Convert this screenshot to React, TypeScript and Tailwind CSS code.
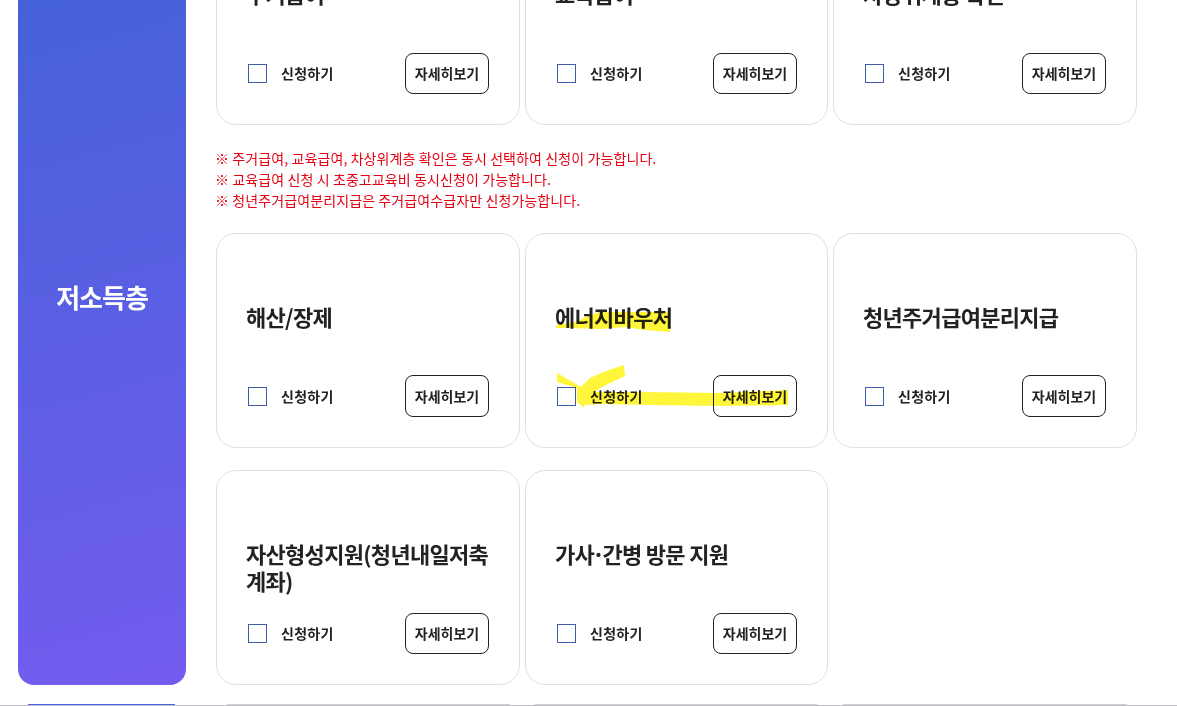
import type { ReactNode } from 'react';

const font = "font-['Noto_Sans_CJK_KR','Noto_Sans',sans-serif]";

function Card({ title, tall = false }: { title: ReactNode; tall?: boolean }) {
  return (
    <div className="bg-white border border-[#e0e0e0] rounded-[20px] pl-[29px] pr-[30px] pt-[69px] h-[215px] flex flex-col">
      <h3 className={`${tall ? 'h-[72px]' : 'h-[73px]'} text-[22px] leading-[27px] font-bold tracking-[-0.7px] text-[#222]`}>{title}</h3>
      <div className="flex items-center justify-between pl-[2px]">
        <label className="flex items-center gap-[14px]">
          <span className="block w-[19px] h-[19px] border border-[#3f5ba9] bg-white" />
          <span className="text-[14px] font-bold tracking-[0.3px] text-[#222]">신청하기</span>
        </label>
        <button className={`w-[84px] ${tall ? 'h-[42px]' : 'h-[41px]'} border border-[#222] rounded-[8px] bg-white text-[14px] font-bold tracking-[0px] text-[#222]`}>
          자세히보기
        </button>
      </div>
    </div>
  );
}

export default function App() {
  return (
    <div className={`relative w-[1177px] h-[706px] overflow-hidden bg-white ${font}`}>
      <div className="-mt-[90px] pl-[18px] pr-[40px] flex gap-[30px] items-start">
        <aside className="w-[168px] h-[775px] shrink-0 rounded-b-[16px] bg-[linear-gradient(165deg,#3f62d6,#735cee)] flex items-center justify-center pb-[3px]">
          <h2 className="text-[26px] font-bold tracking-[-1px] text-white">저소득층</h2>
        </aside>

        <div className="flex-1">
          <div className="grid grid-cols-[304px_303px_304px] gap-x-[5px]">
            <Card title="주거급여" />
            <Card title="교육급여" />
            <Card title="차상위계층 확인" />
          </div>

          <div className="mt-[23px] -ml-[1px] text-[14px] leading-[21px] tracking-[0.1px] text-[#e60012]">
            <p>※ 주거급여, 교육급여, 차상위계층 확인은 동시 선택하여 신청이 가능합니다.</p>
            <p>※ 교육급여 신청 시 초중고교육비 동시신청이 가능합니다.</p>
            <p>※ 청년주거급여분리지급은 주거급여수급자만 신청가능합니다.</p>
          </div>

          <div className="mt-[22px] grid grid-cols-[304px_303px_304px] gap-x-[5px]">
            <Card title="해산/장제" tall />
            <Card title="에너지바우처" tall />
            <Card title="청년주거급여분리지급" tall />
          </div>
          <div className="mt-[22px] grid grid-cols-[304px_303px_304px] gap-x-[5px]">
            <Card title="자산형성지원(청년내일저축계좌)" />
            <Card title={<>가사<span className="-mx-[2px]">·</span>간병 방문 지원</>} />
          </div>
        </div>
      </div>

      {/* 다음 섹션 윗부분 */}
      <div className="absolute left-[28px] top-[704px] w-[147px] h-[1px] bg-[#4a63e0]" />
      <div className="absolute left-[227px] top-[704px] w-[283px] h-[1px] bg-[#d0d0d0]" />
      <div className="absolute left-[535px] top-[704px] w-[282px] h-[1px] bg-[#d0d0d0]" />
      <div className="absolute left-[843px] top-[704px] w-[284px] h-[1px] bg-[#d0d0d0]" />
      <div className="absolute left-0 top-[705px] w-full h-[1px] bg-[#bfbfc4]" />

      {/* 형광펜 표시 */}
      <svg className="absolute left-0 top-0 pointer-events-none mix-blend-multiply" width="1177" height="706">
        <g fill="#fff53a">
          <path d="M556 325 L575 322 L588 316 L600 312 L670 312 L670 332 L645 330 L625 327 L600 329 L570 328 L556 328 Z" />
          <path d="M557 373 L581 387 L590 378 L606 371 L624 365 L625 376 L606 385 L592 393 L585 396 L584 408 L577 402 L577 388 L557 382 Z" />
          <path d="M585 392 L640 392 L720 393 L788 390 L788 405 L720 406 L650 405 L600 404 L584 405 Z" />
        </g>
      </svg>
    </div>
  );
}
